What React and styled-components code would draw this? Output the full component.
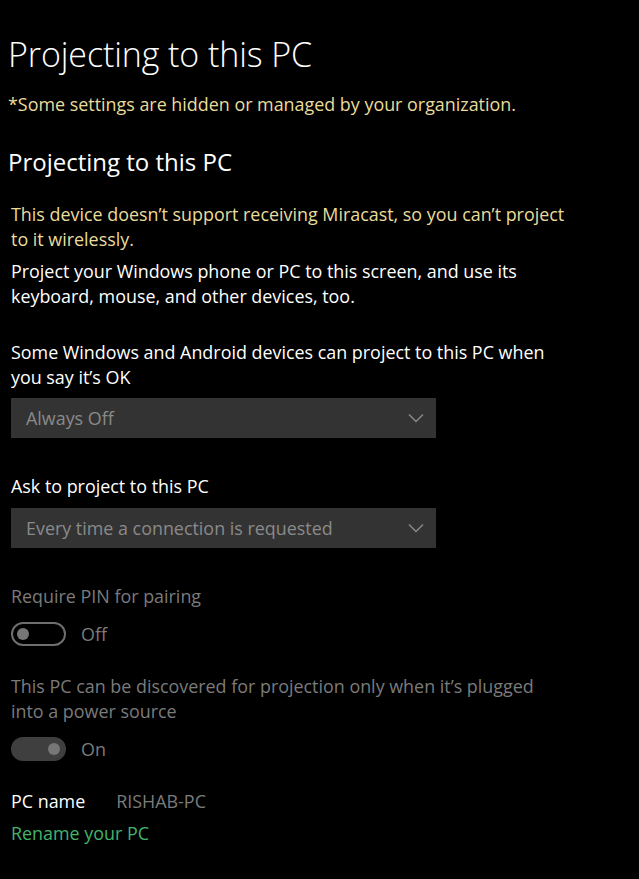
import React from 'react';
import styled, { createGlobalStyle } from 'styled-components';

const GlobalStyle = createGlobalStyle`
  html, body {
    margin: 0;
    padding: 0;
    background: #000;
  }
  body {
    font-family: "Open Sans", "Noto Sans", sans-serif;
    color: #fff;
  }
`;

const COLORS = {
  WARN: '#eadc9c',
  TEXT: '#ffffff',
  DIM: '#7b7b7b',
  LINK: '#43b36c',
  BOX: '#333333',
  BOX_TEXT: '#8a8a8a',
};

const BODY_SIZE = '17.9px';

const Page = styled.div`
  width: 639px;
  min-height: 879px;
  box-sizing: border-box;
  padding: 30px 0 0 8px;
  background: #000;
`;

const Title = styled.h1`
  margin: 0;
  font-size: 34px;
  font-weight: 300;
  line-height: 48px;
  letter-spacing: -0.1px;
`;

const Subtitle = styled.h2`
  margin: 28px 0 0;
  font-size: 24px;
  font-weight: 400;
  line-height: 34px;
`;

const Text = styled.p`
  margin: ${p => p.$mt || 0}px 0 0 ${p => (p.$indent ? 3 : 0)}px;
  font-size: ${BODY_SIZE};
  line-height: 25px;
  color: ${p => p.$color || COLORS.TEXT};
`;

const Select = styled.div`
  margin: ${p => p.$mt || 0}px 0 0 3px;
  width: 425px;
  height: 40px;
  box-sizing: border-box;
  padding: 0 12px 0 15px;
  background: ${COLORS.BOX};
  display: flex;
  align-items: center;
  justify-content: space-between;
  font-size: ${BODY_SIZE};
  color: ${COLORS.BOX_TEXT};
`;

const Chevron = () => (
  <svg width="16" height="10" viewBox="0 0 16 10">
    <path d="M1 1.5 L8 8.5 L15 1.5" fill="none" stroke="#8a8a8a" strokeWidth="1.4" />
  </svg>
);

const ToggleRow = styled.div`
  margin: ${p => p.$mt || 0}px 0 0 3px;
  display: flex;
  align-items: center;
  gap: 15px;
  font-size: ${BODY_SIZE};
  color: ${COLORS.DIM};
`;

const Toggle = styled.div`
  width: 55px;
  height: 24px;
  box-sizing: border-box;
  border-radius: 12px;
  border: 2px solid ${p => (p.$on ? '#3f3f3f' : '#6e6e6e')};
  background: ${p => (p.$on ? '#3f3f3f' : 'transparent')};
  display: flex;
  align-items: center;
  justify-content: ${p => (p.$on ? 'flex-end' : 'flex-start')};
  padding: 0 4px;
`;

const Knob = styled.div`
  width: 12px;
  height: 12px;
  border-radius: 50%;
  background: #777;
`;

const NameRow = styled.div`
  margin: 28px 0 0 3px;
  display: flex;
  gap: 31px;
  font-size: ${BODY_SIZE};
  line-height: 25px;
`;

const NameValue = styled.span`
  color: ${COLORS.DIM};
`;

const Link = styled.a`
  display: block;
  margin: 7px 0 0 3px;
  font-size: ${BODY_SIZE};
  line-height: 25px;
  color: ${COLORS.LINK};
  text-decoration: none;
`;

export default function App() {
  return (
    <Page>
      <GlobalStyle />
      <Title>Projecting to this PC</Title>
      <Text $color={COLORS.WARN} $mt={14}>*Some settings are hidden or managed by your organization.</Text>
      <Subtitle>Projecting to this PC</Subtitle>
      <Text $indent $color={COLORS.WARN} $mt={23}>
        This device doesn’t support receiving Miracast, so you can’t project<br />to it wirelessly.
      </Text>
      <Text $indent $mt={7}>
        Project your Windows phone or PC to this screen, and use its<br />keyboard, mouse, and other devices, too.
      </Text>
      <Text $indent $mt={31}>
        Some Windows and Android devices can project to this PC when<br />you say it’s OK
      </Text>
      <Select $mt={8}>
        <span>Always Off</span>
        <Chevron />
      </Select>
      <Text $indent $mt={36}>Ask to project to this PC</Text>
      <Select $mt={9}>
        <span>Every time a connection is requested</span>
        <Chevron />
      </Select>
      <Text $indent $color={COLORS.DIM} $mt={36}>Require PIN for pairing</Text>
      <ToggleRow $mt={13}>
        <Toggle><Knob /></Toggle>
        <span>Off</span>
      </ToggleRow>
      <Text $indent $color={COLORS.DIM} $mt={28}>
        This PC can be discovered for projection only when it’s plugged<br />into a power source
      </Text>
      <ToggleRow $mt={13}>
        <Toggle $on><Knob /></Toggle>
        <span>On</span>
      </ToggleRow>
      <NameRow>
        <span>PC name</span>
        <NameValue>RISHAB-PC</NameValue>
      </NameRow>
      <Link href="#">Rename your PC</Link>
    </Page>
  );
}
